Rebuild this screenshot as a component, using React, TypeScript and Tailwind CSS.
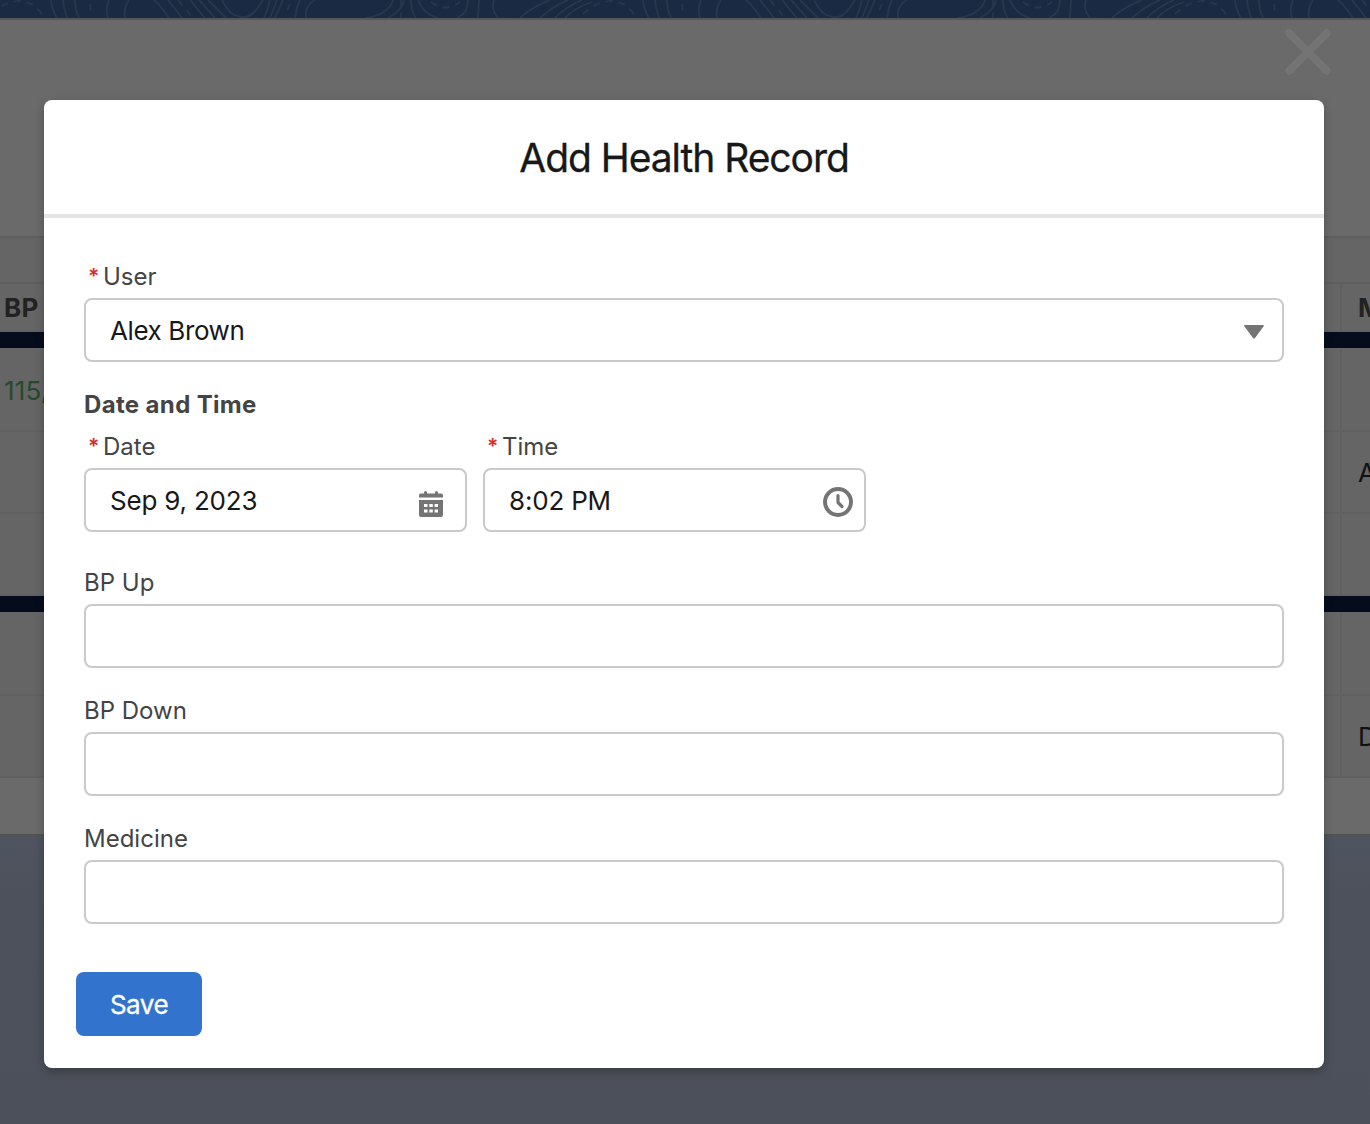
import React from "react";

const contourLines = [
  "M51 0Q52 10 57 18", "M63 0Q64 10 67 18", "M75 0Q75 10 79 18",
  "M109 0Q105 9 108 18", "M129 0Q123 9 125 18", "M154 0Q162 7 169 18",
  "M168 0L182 18", "M190 0L205 18", "M199 0L215 18", "M208 0L226 18",
  "M222 0C232 21 248 21 257 9L263 0", "M270 0Q268 10 264 18", "M277 0L270 18",
  "M283 0L275 18", "M300 0Q296 9 295 18", "M315 0Q304 6 306 18",
  "M393 0C390 10 380 16 366 18", "M404 0Q403 10 388 18", "M411 0Q411 11 416 18",
  "M418 0Q423 14 438 18", "M468 0C468 10 464 15 457 18", "M479 0L478 18",
  "M494 0Q491 10 498 18", "M550 0Q532 7 520 18", "M568 0Q552 7 540 18", "M582 0Q566 7 555 18",
  "M592 2Q574 8 565 18",
];
const contourDashes = [
  "M-9 14Q24 -14 45 18", "M90 4L91 13", "M178 0L193 18", "M290 4L286 14",
  "M401 0V18", "M431 2Q445 13 460 2",
];

function Contours() {
  return (
    <svg className="block h-[18px] w-full" fill="none" strokeWidth="1.8">
      <rect width="1370" height="18" fill="#1a2a43" />
      {[0, 592, 1184].map((x) => (
        <g key={x} transform={`translate(${x} 0)`} stroke="#26394c">
          {contourLines.map((d) => <path key={d} d={d} />)}
          {contourDashes.map((d) => <path key={d} d={d} strokeDasharray="7 6" />)}
        </g>
      ))}
    </svg>
  );
}

function Row({ left, right, className }: { left?: React.ReactNode; right?: React.ReactNode; className: string }) {
  return (
    <div className={`flex items-center justify-between overflow-hidden border-b-2 border-[#606060] bg-[#656565] text-[26px] whitespace-nowrap ${className}`}>
      <div className="pl-1">{left}</div>
      <div className="flex h-full w-[30px] shrink-0 items-center border-l-2 border-[#606060] pl-4">{right}</div>
    </div>
  );
}

function Label({ children, required = false }: { children: React.ReactNode; required?: boolean }) {
  return (
    <div className="flex h-9 items-center text-[24px] text-[#444444]">
      {required && <span className="mr-[7px] ml-1 w-[8px] text-[21px] font-semibold text-[#d92c2c]">*</span>}
      {children}
    </div>
  );
}

function Field({ value, icon, tracking = "" }: { value?: string; icon?: React.ReactNode; tracking?: string }) {
  return (
    <div className="mt-[3px] flex h-16 w-full items-center justify-between rounded-lg border-2 border-[#c9c9c9] bg-white pl-6 text-[26px] text-[#181818]">
      <span className={tracking}>{value}</span>
      {icon}
    </div>
  );
}

const CalendarIcon = () => (
  <svg className="mt-2 mr-[22px]" width="24" height="26" viewBox="0 0 24 26" fill="#747474">
    <path d="M2 2.500H5V1.500Q5 0 6.500 0T8 1.500V2.500H16V1.500Q16 0 17.500 0T19 1.500V2.500H22Q24 2.500 24 4.500V6.500H0V4.500Q0 2.500 2 2.500Z" />
    <path fillRule="evenodd" d="M0 9H24V24Q24 26 22 26H2Q0 26 0 24ZM5 13V16H8.500V13ZM10.300 13V16H13.800V13ZM15.600 13V16H19V13ZM5 18.500V21.500H8.500V18.500ZM10.300 18.500V21.500H13.800V18.500ZM15.600 18.500V21.500H19V18.500Z" />
  </svg>
);

const ClockIcon = () => (
  <svg className="mt-1 mr-[11px]" width="30" height="30" viewBox="0 0 30 30" fill="none" stroke="#747474">
    <circle cx="15" cy="15" r="13" strokeWidth="4" />
    <path d="M15 8.500V15.500L19 19.500" strokeWidth="3.2" strokeLinecap="round" strokeLinejoin="round" />
  </svg>
);

const Caret = () => (
  <svg className="mt-[3px] mr-[18px]" width="20" height="14" viewBox="0 0 20 14" fill="#747474">
    <path d="M1 0H19Q20.500 0 19.500 1.500L11 13Q10 14 9 13L.5 1.500Q-.5 0 1 0Z" />
  </svg>
);

export default function App() {
  return (
    <div className="relative h-[1124px] w-[1370px] overflow-hidden bg-[#4d515c] font-['Inter',sans-serif]">
      <Contours />
      <div className="h-[818px] border-y-2 border-t-[#565656] border-b-[#525252] bg-[#6a6a6a]">
        <div className="h-[218px] border-b-2 border-[#5e5e5e]" />
        <div className="h-[46px] border-b-2 border-[#5e5e5e] bg-[#656565]" />
        <Row className="h-12 font-bold tracking-[0.4px] text-[#222222]" left="BP" right="Medicine" />
        <div className="h-4 bg-[#050d1c]" />
        <Row className="h-[84px] pt-[2px] tracking-[0.2px] text-[#264a2b]" left="115/75" />
        <Row className="h-[82px] text-[#111111]" right="Aspirin" />
        <Row className="h-[82px]" />
        <div className="h-4 bg-[#050d1c]" />
        <Row className="h-[84px]" />
        <Row className="h-[82px] text-[#111111]" right="Dolo" />
      </div>
      <div className="h-[288px] bg-linear-to-b from-[#4e5460] via-[#4d515c] via-20% to-[#4c505a]" />

      <button aria-label="Close" className="absolute top-[29px] left-[1285px]">
        <svg className="block" width="46" height="46" viewBox="0 0 46 46" fill="none" stroke="#747474" strokeWidth="7.500" strokeLinecap="round">
          <path d="M4 4L42 42M42 4L4 42" />
        </svg>
      </button>

      <section role="dialog" className="absolute top-[100px] left-11 h-[968px] w-[1280px] rounded-lg bg-white shadow-[0_4px_10px_rgba(0,0,0,0.25)]">
        <header className="flex h-[118px] items-center justify-center border-b-4 border-[#e5e5e5] pt-[2px]">
          <h1 className="text-[39px] leading-[50px] tracking-[-1.05px] text-[#181818] [-webkit-text-stroke:0.3px]">Add Health Record</h1>
        </header>
        <div className="px-10 pt-[41px]">
          <Label required>User</Label>
          <Field value="Alex Brown" icon={<Caret />} tracking="tracking-[-0.4px]" />
          <div className="mt-6 flex h-[38px] items-center text-[24px] font-bold tracking-[0.35px] text-[#444444]">Date and Time</div>
          <div className="mt-[5px] flex gap-4">
            <div className="w-[383px]">
              <Label required>Date</Label>
              <Field value="Sep 9, 2023" icon={<CalendarIcon />} tracking="tracking-[-0.2px]" />
            </div>
            <div className="w-[383px]">
              <Label required>Time</Label>
              <Field value="8:02 PM" icon={<ClockIcon />} tracking="tracking-[-0.2px]" />
            </div>
          </div>
          <div className="mt-[33px]"><Label>BP Up</Label><Field /></div>
          <div className="mt-[25px]"><Label>BP Down</Label><Field /></div>
          <div className="mt-[25px]"><Label>Medicine</Label><Field /></div>
          <button className="mt-12 -ml-2 flex h-16 w-[126px] items-center justify-center rounded-lg bg-[#3274cd] pt-px text-[26px] tracking-[-0.5px] text-white [-webkit-text-stroke:0.3px]">Save</button>
        </div>
      </section>
    </div>
  );
}
